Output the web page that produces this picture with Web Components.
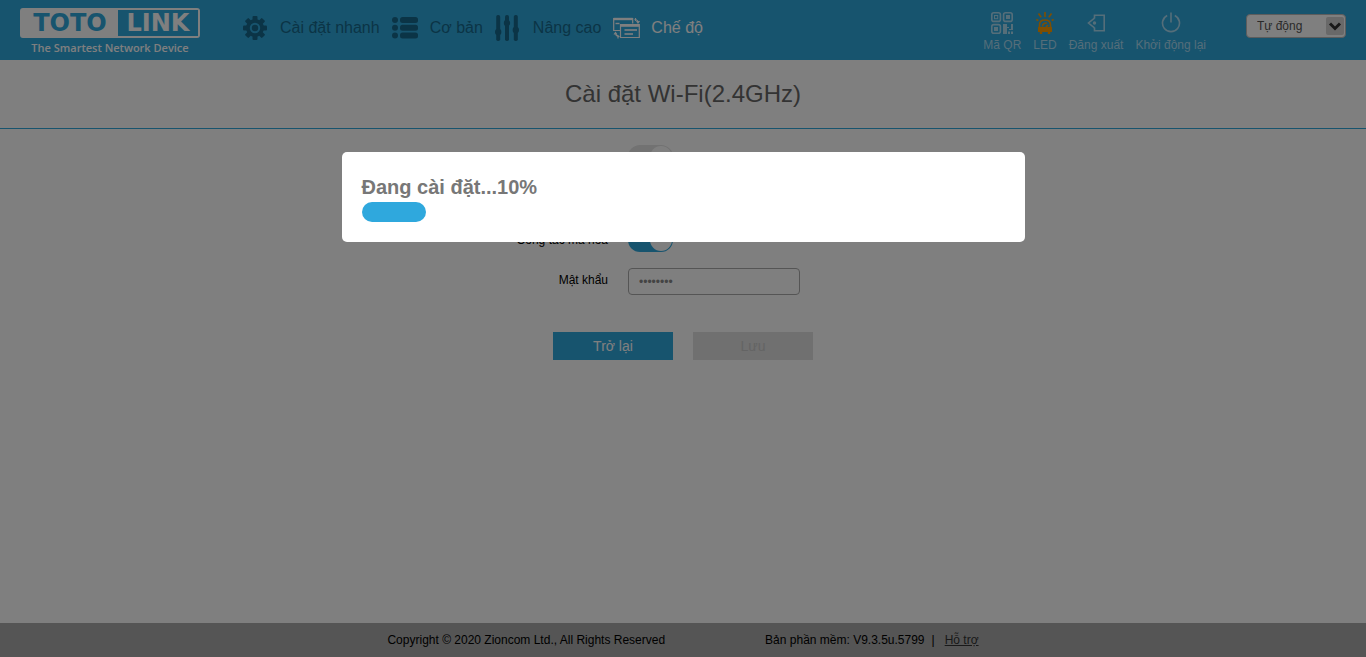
<!DOCTYPE html>
<html lang="vi">
<head>
<meta charset="UTF-8">
<meta name="viewport" content="width=device-width, initial-scale=1.0">
<title>TOTOLINK</title>
<style>
  body {
    margin: 0;
    font-family: "Liberation Sans", Arial, sans-serif;
    font-size: 12px;
    color: #000;
    background: #fff;
    --brand: #2fa8dd;
  }
</style>
</head>
<body>
<router-app></router-app>

<script>
const icons = {
  gear: `<svg width="25" height="24" viewBox="-1 0 25 24"><g fill="currentColor">
    <rect x="9.5" y="0" width="5" height="24" rx="1"/><rect x="0" y="9.5" width="24" height="5" rx="1"/>
    <g transform="rotate(45 12 12)"><rect x="9.5" y="0" width="5" height="24" rx="1"/><rect x="0" y="9.5" width="24" height="5" rx="1"/></g>
    <circle cx="12" cy="12" r="9"/></g>
    <circle cx="12" cy="12" r="4.2" fill="currentColor" stroke="var(--brand)" stroke-width="2"/></svg>`,
  list: `<svg width="26" height="22" viewBox="0 0 26 22" fill="currentColor">
    <circle cx="3" cy="3" r="3"/><circle cx="3" cy="10.8" r="3"/><circle cx="3" cy="18.5" r="3"/>
    <rect x="8" y="0" width="18" height="6" rx="2.5"/><rect x="8" y="7.8" width="18" height="6" rx="2.5"/><rect x="8" y="15.5" width="18" height="6" rx="2.5"/></svg>`,
  sliders: `<svg width="24" height="26" viewBox="0 0 24 26" fill="currentColor">
    <rect x="1.2" y="0" width="4" height="26" rx="1.7"/><rect x="10" y="0" width="4" height="26" rx="1.7"/><rect x="18.8" y="0" width="4" height="26" rx="1.7"/>
    <circle cx="3.2" cy="17" r="3.2"/><circle cx="12" cy="8" r="3.2"/><circle cx="20.8" cy="15" r="3.2"/></svg>`,
  mode: `<svg width="28" height="22" viewBox="0 0 28 22" fill="none" stroke="currentColor" stroke-width="1.2">
    <path d="M7 13.5H.7V1.500h19v5"/><path d="M.7 2h19" stroke-width="2.4"/><path d="M2.500 6.500h4" stroke-width="1.4"/>
    <path d="M7.500 7.500h18.800v13H7.500z"/><path d="M7.500 8.500h18.800" stroke-width="2.6"/>
    <path d="M11.500 13h12.500" stroke-width="1.6"/><path d="M11.500 17h8.500" stroke-width="1.6"/>
    <path d="M21.500 2.500c2.500 0 3.500 1 3.500 3M23.500 4l1.500 2L26.500 4M22.500 1v3"/><path d="M2.500 15.500c0 2.500 1 4 4 4M1 17.500l1.500-2 1.500 2M5 18v3.500"/></svg>`,
  qr: `<svg width="22" height="22" viewBox="0 0 22 22" fill="none" stroke="currentColor" stroke-width="1.6">
    <rect x=".8" y=".8" width="8.6" height="8.6" rx="2"/><rect x="12.600" y=".8" width="8.6" height="8.6" rx="2"/><rect x=".8" y="12.600" width="8.6" height="8.6" rx="2"/>
    <rect x="3.500" y="3.500" width="3.200" height="3.200" stroke-width="1"/><path d="M15 3h4v4h-4zM3 15h4v4H3z" fill="currentColor" stroke="none"/>
    <path d="M12 12h4v3h2v2h2v-5h2v6h-4v-2h-2v6h-4zM17 19.500h2V22h-2zM20 19.500h2V22h-2z" fill="currentColor" stroke="none"/></svg>`,
  led: `<svg width="18" height="22" viewBox="0 0 18 22" fill="none" stroke="currentColor" stroke-width="1.6">
    <path d="M3.500 16v-3c0-3 2-5 5.500-5s5.500 2 5.500 5v3"/><path d="M6.500 14.500c0-2.500 1-3.500 4.500-3.500" stroke-width="1.4"/><path d="M10 15l2-2" stroke-width="1.6"/>
    <path d="M2 15h14v5H2z" fill="currentColor" stroke="none"/><path d="M5 19v3M13 19v3" stroke-width="2.4"/>
    <path d="M9 0v5M2.500 1.500l2.700 3.700M15.500 1.500l-2.700 3.700M.3 7.500l2 1M17.700 7.500l-2 1" stroke-width="1.6"/></svg>`,
  logout: `<svg width="20" height="20" viewBox="0 0 20 20" fill="none" stroke="currentColor" stroke-width="1.6">
    <path d="M8.500 5.500V2.300h9.700v15.400H8.500v-3.200"/><path d="M8.500 5.200 2.500 10l6 4.800"/><circle cx="8.500" cy="10" r="1.700" fill="currentColor" stroke="none"/></svg>`,
  power: `<svg width="20" height="22" viewBox="0 0 20 22" fill="none" stroke="currentColor" stroke-width="1.6">
    <path d="M6.200 3.500A8.500 8.500 0 1 0 13.800 3.500"/><path d="M10 .5v10"/></svg>`
};

class RouterApp extends HTMLElement {
  constructor() {
    super();
    this.attachShadow({ mode: 'open' });
  }

  connectedCallback() {
    this.shadowRoot.innerHTML = `
      <style>
        :host {
          display: flex;
          flex-direction: column;
          min-height: 100vh;
        }
        main {
          flex: 1;
        }
        h2 {
          margin: 0;
          padding: 18px 0;
          border-bottom: 1px solid var(--brand);
          font-size: 24px;
          line-height: 32px;
          font-weight: 400;
          text-align: center;
          color: #666;
        }
      </style>
      <app-header>
        <nav-item icon="gear">Cài đặt nhanh</nav-item>
        <nav-item icon="list">Cơ bản</nav-item>
        <nav-item icon="sliders">Nâng cao</nav-item>
        <nav-item icon="mode" active>Chế độ</nav-item>
        <tool-button slot="tools" icon="qr">Mã QR</tool-button>
        <tool-button slot="tools" icon="led">LED</tool-button>
        <tool-button slot="tools" icon="logout">Đăng xuất</tool-button>
        <tool-button slot="tools" icon="power">Khởi động lại</tool-button>
      </app-header>
      <main>
        <h2>Cài đặt Wi-Fi(2.4GHz)</h2>
        <wifi-form></wifi-form>
      </main>
      <app-footer></app-footer>
      <progress-dialog value="10">Đang cài đặt...</progress-dialog>
    `;
  }
}

class AppHeader extends HTMLElement {
  constructor() {
    super();
    this.attachShadow({ mode: 'open' });
  }

  connectedCallback() {
    this.shadowRoot.innerHTML = `
      <style>
        :host {
          display: block;
          background: var(--brand);
        }
        header {
          display: flex;
          align-items: center;
          min-height: 60px;
          padding: 0 20px;
          box-sizing: border-box;
        }
        nav {
          display: flex;
          gap: 12px;
          margin-left: 42px;
          padding-bottom: 4px;
        }
        .tools {
          display: flex;
          gap: 12px;
          margin-left: auto;
          margin-right: 40px;
          padding-top: 4px;
        }
      </style>
      <header>
        <brand-logo></brand-logo>
        <nav><slot></slot></nav>
        <div class="tools"><slot name="tools"></slot></div>
        <language-select></language-select>
      </header>
    `;
  }
}

class BrandLogo extends HTMLElement {
  constructor() {
    super();
    this.attachShadow({ mode: 'open' });
  }

  connectedCallback() {
    this.shadowRoot.innerHTML = `
      <style>
        :host {
          display: block;
          width: 180px;
          padding-top: 3px;
          color: #fff;
          text-align: center;
        }
        .mark {
          display: flex;
          box-sizing: border-box;
          height: 30px;
          border: 2px solid #fff;
          border-radius: 3px;
          background: #fff;
          font: 700 24px/26px "DejaVu Sans", sans-serif;
        }
        .toto {
          flex: 0 0 96px;
          color: var(--brand);
        }
        .link {
          flex: 1;
          background: var(--brand);
        }
        .tagline {
          font: 600 11px/16px "Open Sans", sans-serif;
          white-space: nowrap;
          padding-top: 2px;
        }
      </style>
      <div class="mark"><span class="toto">TOTO</span><span class="link">LINK</span></div>
      <div class="tagline">The Smartest Network Device</div>
    `;
  }
}

class NavItem extends HTMLElement {
  constructor() {
    super();
    this.attachShadow({ mode: 'open' });
  }

  connectedCallback() {
    this.shadowRoot.innerHTML = `
      <style>
        :host {
          display: block;
        }
        a {
          display: flex;
          align-items: center;
          gap: 10px;
          font-size: 16px;
          line-height: 28px;
          white-space: nowrap;
          color: #17698c;
          text-decoration: none;
        }
        :host([active]) a {
          color: #fff;
        }
        .icon {
          display: flex;
          align-items: center;
          width: 28px;
          height: 28px;
        }
      </style>
      <a href="#"><span class="icon">${icons[this.getAttribute('icon')]}</span><slot></slot></a>
    `;
  }
}

class ToolButton extends HTMLElement {
  constructor() {
    super();
    this.attachShadow({ mode: 'open' });
  }

  connectedCallback() {
    this.shadowRoot.innerHTML = `
      <style>
        :host {
          display: block;
        }
        button {
          display: flex;
          flex-direction: column;
          align-items: center;
          gap: 4px;
          padding: 0;
          border: 0;
          background: none;
          font: inherit;
          line-height: 14px;
          white-space: nowrap;
          color: #aadcf3;
          cursor: pointer;
        }
        .icon {
          display: flex;
          align-items: center;
          height: 22px;
        }
        :host([icon="led"]) .icon {
          color: #ff9c00;
        }
      </style>
      <button type="button"><span class="icon">${icons[this.getAttribute('icon')]}</span><slot></slot></button>
    `;
  }
}

class LanguageSelect extends HTMLElement {
  constructor() {
    super();
    this.attachShadow({ mode: 'open' });
  }

  connectedCallback() {
    this.shadowRoot.innerHTML = `
      <style>
        :host {
          display: block;
          padding-bottom: 9px;
        }
        .box {
          display: grid;
          width: 100px;
          height: 24px;
          box-sizing: border-box;
          border: 1px solid #bbb;
          border-radius: 4px;
          background: #fff;
          overflow: hidden;
        }
        select, svg {
          grid-area: 1 / 1;
        }
        select {
          appearance: none;
          border: 0;
          padding: 0 10px;
          background: none;
          font: inherit;
          color: #555;
        }
        svg {
          justify-self: end;
          align-self: center;
          pointer-events: none;
        }
      </style>
      <div class="box">
        <select aria-label="Ngôn ngữ"><option>Tự động</option></select>
        <svg width="19" height="20" viewBox="0 0 19 20"><rect width="18" height="18" y="1" rx="2" fill="#d2d2d2"/><path d="M4 7.500l5 5 5-5" fill="none" stroke="#333" stroke-width="3"/></svg>
      </div>
    `;
  }
}

class WifiForm extends HTMLElement {
  constructor() {
    super();
    this.attachShadow({ mode: 'open' });
  }

  connectedCallback() {
    this.shadowRoot.innerHTML = `
      <style>
        :host {
          display: block;
          padding-top: 16px;
        }
        .fields {
          display: grid;
          grid-template-columns: 225px 1fr;
          align-items: start;
          gap: 16px 20px;
          max-width: 600px;
          margin: 0 auto;
        }
        label {
          text-align: right;
          line-height: 24px;
        }
        .text {
          width: 172px;
          height: 27px;
          box-sizing: border-box;
          padding: 0 10px;
          border: 1px solid #aaa;
          border-radius: 4px;
          background: #fff;
          font: inherit;
          color: #888;
        }
        .switch {
          appearance: none;
          display: flex;
          width: 45px;
          height: 24px;
          margin: 0;
          padding: 1px;
          box-sizing: border-box;
          border-radius: 12px;
          background: #e4e4e4;
        }
        .switch::before {
          content: "";
          width: 22px;
          height: 22px;
          margin-left: auto;
          border-radius: 50%;
          background: #fff;
        }
        .switch:checked {
          background: var(--brand);
        }
        .actions {
          display: flex;
          justify-content: center;
          gap: 20px;
          padding-top: 37px;
        }
        button {
          width: 120px;
          height: 28px;
          padding: 0;
          border: 0;
          background: var(--brand);
          font: inherit;
          font-size: 14px;
          color: #fff;
        }
        button:disabled {
          background: #e0e0e0;
          color: #c8c8c8;
        }
      </style>
      <form>
        <div class="fields">
          <label for="wifi">Wi-Fi</label>
          <input id="wifi" class="switch" type="checkbox" role="switch">
          <label for="ssid">SSID</label>
          <input id="ssid" class="text" type="text">
          <label for="encrypt">Công tắc mã hóa</label>
          <input id="encrypt" class="switch" type="checkbox" role="switch" checked>
          <label for="password">Mật khẩu</label>
          <input id="password" class="text" type="password" value="12345678" autocomplete="off">
        </div>
        <div class="actions">
          <button type="button">Trở lại</button>
          <button type="submit" disabled>Lưu</button>
        </div>
      </form>
    `;
  }
}

class AppFooter extends HTMLElement {
  constructor() {
    super();
    this.attachShadow({ mode: 'open' });
  }

  connectedCallback() {
    this.shadowRoot.innerHTML = `
      <style>
        :host {
          display: block;
          background: #aaa;
        }
        footer {
          display: flex;
          justify-content: center;
          gap: 100px;
          line-height: 34px;
        }
        .version {
          display: flex;
          gap: 7px;
        }
        a {
          margin-left: 3px;
          color: #333;
        }
      </style>
      <footer>
        <span>Copyright © 2020 Zioncom Ltd., All Rights Reserved</span>
        <div class="version"><span>Bản phần mềm: V9.3.5u.5799</span><span>|</span><a href="#">Hỗ trợ</a></div>
      </footer>
    `;
  }
}

class ProgressDialog extends HTMLElement {
  constructor() {
    super();
    this.attachShadow({ mode: 'open' });
  }

  connectedCallback() {
    const value = this.getAttribute('value');
    this.shadowRoot.innerHTML = `
      <style>
        :host {
          position: fixed;
          inset: 0;
          z-index: 10;
          background: rgba(0, 0, 0, 0.5);
        }
        .dialog {
          width: 50%;
          box-sizing: border-box;
          margin: 152px auto 0;
          padding: 20px;
          border-radius: 5px;
          background: #fff;
        }
        .text {
          font-size: 20px;
          line-height: 30px;
          font-weight: 700;
          color: #777;
        }
        .bar {
          width: ${value}%;
          height: 20px;
          border-radius: 10px;
          background: #2fa8dd;
        }
      </style>
      <div class="dialog" role="dialog" aria-modal="true">
        <div class="text"><slot></slot>${value}%</div>
        <div class="bar" role="progressbar" aria-label="Tiến trình" aria-valuenow="${value}"></div>
      </div>
    `;
  }
}

customElements.define('nav-item', NavItem);
customElements.define('tool-button', ToolButton);
customElements.define('brand-logo', BrandLogo);
customElements.define('language-select', LanguageSelect);
customElements.define('app-header', AppHeader);
customElements.define('wifi-form', WifiForm);
customElements.define('app-footer', AppFooter);
customElements.define('progress-dialog', ProgressDialog);
customElements.define('router-app', RouterApp);
</script>
</body>
</html>
